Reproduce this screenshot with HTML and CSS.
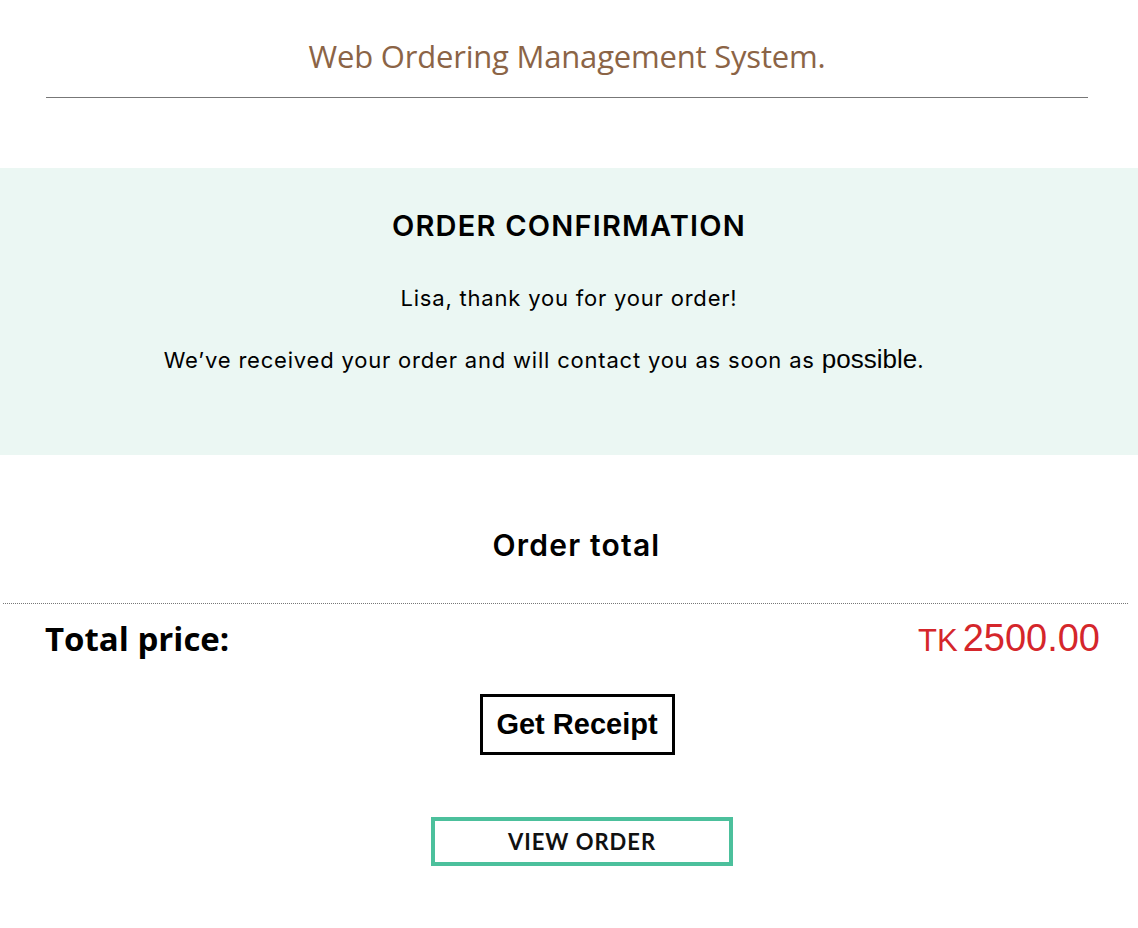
FILE: index.html
```html
<!DOCTYPE html>
<html lang="en">
<head>
<meta charset="utf-8">
<title>Order Confirmation</title>
<link rel="stylesheet" href="styles.css">
</head>
<body>
<header class="site-header">
  <h1 class="site-title">Web Ordering Management System.</h1>
</header>

<section class="confirm">
  <h2 class="confirm-title">ORDER CONFIRMATION</h2>
  <p class="confirm-thanks">Lisa, thank you for your order!</p>
  <p class="confirm-msg">We’ve received your order and will contact you as soon as <span class="big">possible</span>.</p>
</section>

<section class="total">
  <h3 class="total-title">Order total</h3>
  <div class="total-row">
    <span class="total-label">Total price:</span>
    <span class="total-price"><span class="cur">TK</span>2500.00</span>
  </div>
  <div class="actions">
    <button class="btn-receipt">Get Receipt</button>
    <button class="btn-view">VIEW ORDER</button>
  </div>
</section>
</body>
</html>
```

FILE: styles.css
```css
html, body {
  margin: 0;
  padding: 0;
  background: #ffffff;
}

body {
  font-family: "Open Sans", "Liberation Sans", sans-serif;
  color: #000;
}

.site-header {
  margin: 0 50px 0 46px;
  padding-top: 36px;
  border-bottom: 1px solid #777;
  height: 98px;
  box-sizing: border-box;
}

.site-title {
  margin: 0;
  text-align: center;
  font-family: "Open Sans", sans-serif;
  font-weight: 400;
  font-size: 31px;
  line-height: 40px;
  color: #8b6446;
  letter-spacing: -0.2px;
}

.confirm {
  margin-top: 70px;
  background: #ebf7f3;
  height: 287px;
  box-sizing: border-box;
  padding-top: 38px;
  text-align: center;
  font-family: "Inter", sans-serif;
}

.confirm-title {
  margin: 0;
  font-size: 29px;
  font-weight: 600;
  letter-spacing: 1.2px;
  line-height: 40px;
}

.confirm-thanks {
  margin: 38px 0 0;
  font-size: 22px;
  line-height: 28px;
  font-weight: 400;
  letter-spacing: 0.8px;
}

.confirm-msg {
  margin: 32px 0 0;
  padding-right: 50px;
  font-size: 22px;
  line-height: 30px;
  letter-spacing: 0.8px;
}

.confirm-msg .big {
  font-family: "Liberation Sans", Arial, sans-serif;
  font-size: 26px;
  letter-spacing: 0;
}

.total {
  padding-top: 68px;
}

.total-title {
  margin: 0 0 0 15px;
  text-align: center;
  font-family: "Inter", sans-serif;
  font-weight: 600;
  font-size: 30px;
  line-height: 44px;
  letter-spacing: 1.2px;
}

.total-row {
  margin: 36px 10px 0 3px;
  border-top: 1px dotted #777;
  display: flex;
  justify-content: space-between;
  align-items: baseline;
  padding: 12px 28px 0 42px;
}

.total-label {
  font-family: "Open Sans", sans-serif;
  font-weight: 700;
  font-size: 33px;
}

.total-price {
  font-family: "Liberation Sans", Arial, sans-serif;
  color: #d5262b;
  font-size: 38px;
}

.total-price .cur {
  font-size: 31px;
  margin-right: 5px;
}

.actions {
  display: flex;
  flex-direction: column;
  align-items: center;
  gap: 62px;
  margin-top: 33px;
}

.btn-receipt {
  background: #fff;
  border: 3px solid #000;
  font-family: "Liberation Sans", Arial, sans-serif;
  font-weight: 700;
  font-size: 29px;
  color: #000;
  padding: 0;
  height: 61px;
  width: 195px;
  margin-left: 16px;
}

.btn-view {
  background: #fff;
  border: 4px solid #4cc09c;
  font-family: "Lato", sans-serif;
  font-weight: 700;
  font-size: 22px;
  letter-spacing: 1px;
  color: #111;
  width: 302px;
  height: 49px;
  margin-left: 26px;
}
```
